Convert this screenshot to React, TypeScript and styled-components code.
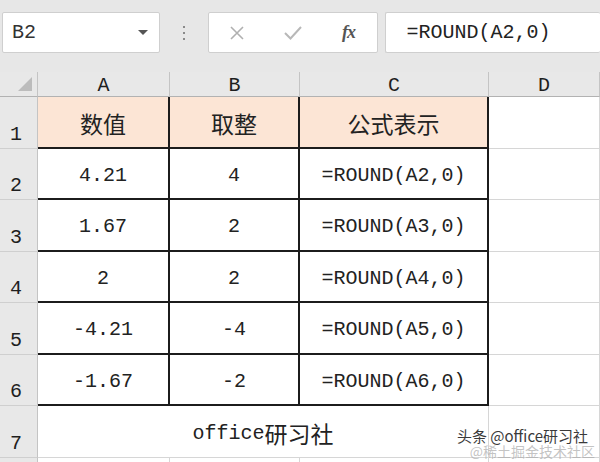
import React from 'react';
import styled, { createGlobalStyle } from 'styled-components';

const GlobalStyle = createGlobalStyle`
  html, body {
    margin: 0;
    padding: 0;
    background: #e7e7e7;
    overflow: hidden;
  }
  body {
    font-family: "Liberation Mono", "Noto Sans CJK SC", monospace;
    color: #222;
  }
`;

const Page = styled.div`
  width: 600px;
  height: 462px;
  position: relative;
  overflow: hidden;
  background: #e7e7e7;
`;

const Toolbar = styled.div`
  display: flex;
  align-items: center;
  height: 72px;
  padding: 12px 0 19px 2px;
  box-sizing: border-box;
`;

const Box = styled.div<{ $width: string }>`
  height: 41px;
  width: ${p => p.$width};
  box-sizing: border-box;
  background: #fff;
  border: 1px solid #cfcfcf;
  border-radius: 2px;
  display: flex;
  align-items: center;
`;

const FormulaBox = styled(Box)`
  margin-left: 7px;
  border-right: none;
`;

const NameText = styled.span`
  font-size: 20px;
  padding-left: 9px;
  flex: 1;
  color: #333;
`;

const Caret = styled.span`
  width: 0;
  height: 0;
  border-left: 5px solid transparent;
  border-right: 5px solid transparent;
  border-top: 5px solid #555;
  margin-right: 11px;
`;

const Dots = styled.div`
  width: 48px;
  display: flex;
  flex-direction: column;
  align-items: center;
  gap: 4px;
  span {
    width: 2px;
    height: 2px;
    background: #8a8a8a;
  }
`;

const IconSlot = styled.div`
  width: 56px;
  display: flex;
  justify-content: center;
  align-items: center;
`;

const Fx = styled.span`
  font-family: "Liberation Serif", serif;
  font-style: italic;
  font-weight: bold;
  font-size: 18px;
  color: #555;
  letter-spacing: -1px;
`;

const FormulaText = styled.span`
  font-size: 20px;
  padding-left: 21px;
  color: #222;
`;

const Sheet = styled.div`
  display: grid;
  grid-template-columns: 38px 132px 130px 189px 1fr;
  grid-template-rows: 25px repeat(8, 51.5px);
  background: #fff;
`;

const Corner = styled.div`
  background: #e8e8e8;
  border-right: 1px solid #c4c4c4;
  border-bottom: 1px solid #b2b2b2;
  box-sizing: border-box;
  display: flex;
  justify-content: flex-end;
  align-items: flex-end;
  padding: 0 5px 5px 0;
`;

const CornerMark = styled.span`
  width: 0;
  height: 0;
  border-left: 14px solid transparent;
  border-bottom: 14px solid #bcbcbc;
`;

const ColHead = styled.div`
  background: #e8e8e8;
  border-right: 1px solid #c4c4c4;
  border-bottom: 1px solid #b2b2b2;
  box-sizing: border-box;
  display: flex;
  justify-content: center;
  align-items: center;
  font-size: 20px;
  padding-top: 2px;
  color: #1e1e1e;
`;

const RowHead = styled.div`
  background: #e8e8e8;
  border-right: 1px solid #c4c4c4;
  border-bottom: 1px solid #cfcfcf;
  box-sizing: border-box;
  display: flex;
  align-items: flex-end;
  padding: 0 0 2px 10px;
  font-size: 20px;
  color: #1e1e1e;
`;

const Cell = styled.div<{ $fill?: string; $strong?: boolean; $span?: number }>`
  background: ${p => p.$fill || '#fff'};
  box-sizing: border-box;
  border-right: ${p => (p.$strong ? '2px solid #1c1c1c' : '1px solid #d6d6d6')};
  border-bottom: ${p => (p.$strong ? '2px solid #1c1c1c' : '1px solid #d6d6d6')};
  grid-column: ${p => (p.$span ? `span ${p.$span}` : 'auto')};
  display: flex;
  justify-content: center;
  align-items: center;
  padding-top: 4px;
  font-size: 20px;
  color: #222;
  white-space: nowrap;
`;

const Han = styled.span`
  font-family: "Noto Sans CJK SC", sans-serif;
  font-size: 23px;
  line-height: 1;
`;

const Watermark = styled.div`
  position: absolute;
  right: 12px;
  bottom: 16px;
  font-family: "Noto Sans CJK SC", sans-serif;
  font-size: 15px;
  color: #3a3a3a;
  text-shadow: 0 0 2px #fff, 0 0 2px #fff;
  white-space: nowrap;
`;

const SubMark = styled.div`
  position: absolute;
  right: 5px;
  bottom: 1px;
  font-family: "Noto Sans CJK SC", sans-serif;
  font-size: 14px;
  color: rgba(170, 170, 170, 0.7);
  white-space: nowrap;
`;

const PEACH = '#fce5d5';

const rows = [
  ['4.21', '4', '=ROUND(A2,0)'],
  ['1.67', '2', '=ROUND(A3,0)'],
  ['2', '2', '=ROUND(A4,0)'],
  ['-4.21', '-4', '=ROUND(A5,0)'],
  ['-1.67', '-2', '=ROUND(A6,0)'],
];

const App: React.FC = () => (
  <Page>
    <GlobalStyle />
    <Toolbar>
      <Box $width="158px">
        <NameText>B2</NameText>
        <Caret />
      </Box>
      <Dots>
        <span />
        <span />
        <span />
      </Dots>
      <Box $width="170px">
        <IconSlot>
          <svg width="18" height="18" viewBox="0 0 18 18">
            <path d="M3 3 L15 15 M15 3 L3 15" stroke="#b0b0b0" strokeWidth="1.6" fill="none" />
          </svg>
        </IconSlot>
        <IconSlot>
          <svg width="20" height="18" viewBox="0 0 20 18">
            <path d="M2 9 L7.5 14.5 L18 3" stroke="#b8b8b8" strokeWidth="2" fill="none" />
          </svg>
        </IconSlot>
        <IconSlot>
          <Fx>fx</Fx>
        </IconSlot>
      </Box>
      <FormulaBox $width="216px">
        <FormulaText>=ROUND(A2,0)</FormulaText>
      </FormulaBox>
    </Toolbar>

    <Sheet>
      <Corner>
        <CornerMark />
      </Corner>
      <ColHead>A</ColHead>
      <ColHead>B</ColHead>
      <ColHead>C</ColHead>
      <ColHead>D</ColHead>

      <RowHead>1</RowHead>
      <Cell $fill={PEACH} $strong><Han>数值</Han></Cell>
      <Cell $fill={PEACH} $strong><Han>取整</Han></Cell>
      <Cell $fill={PEACH} $strong><Han>公式表示</Han></Cell>
      <Cell />

      {rows.map((r, i) => (
        <React.Fragment key={i}>
          <RowHead>{i + 2}</RowHead>
          <Cell $strong>{r[0]}</Cell>
          <Cell $strong>{r[1]}</Cell>
          <Cell $strong>{r[2]}</Cell>
          <Cell />
        </React.Fragment>
      ))}

      <RowHead>7</RowHead>
      <Cell $span={3}>
        office<Han>研习社</Han>
      </Cell>
      <Cell />

      <RowHead />
      <Cell />
      <Cell />
      <Cell />
      <Cell />
    </Sheet>

    <Watermark>头条 @office研习社</Watermark>
    <SubMark>@稀土掘金技术社区</SubMark>
  </Page>
);

export default App;
